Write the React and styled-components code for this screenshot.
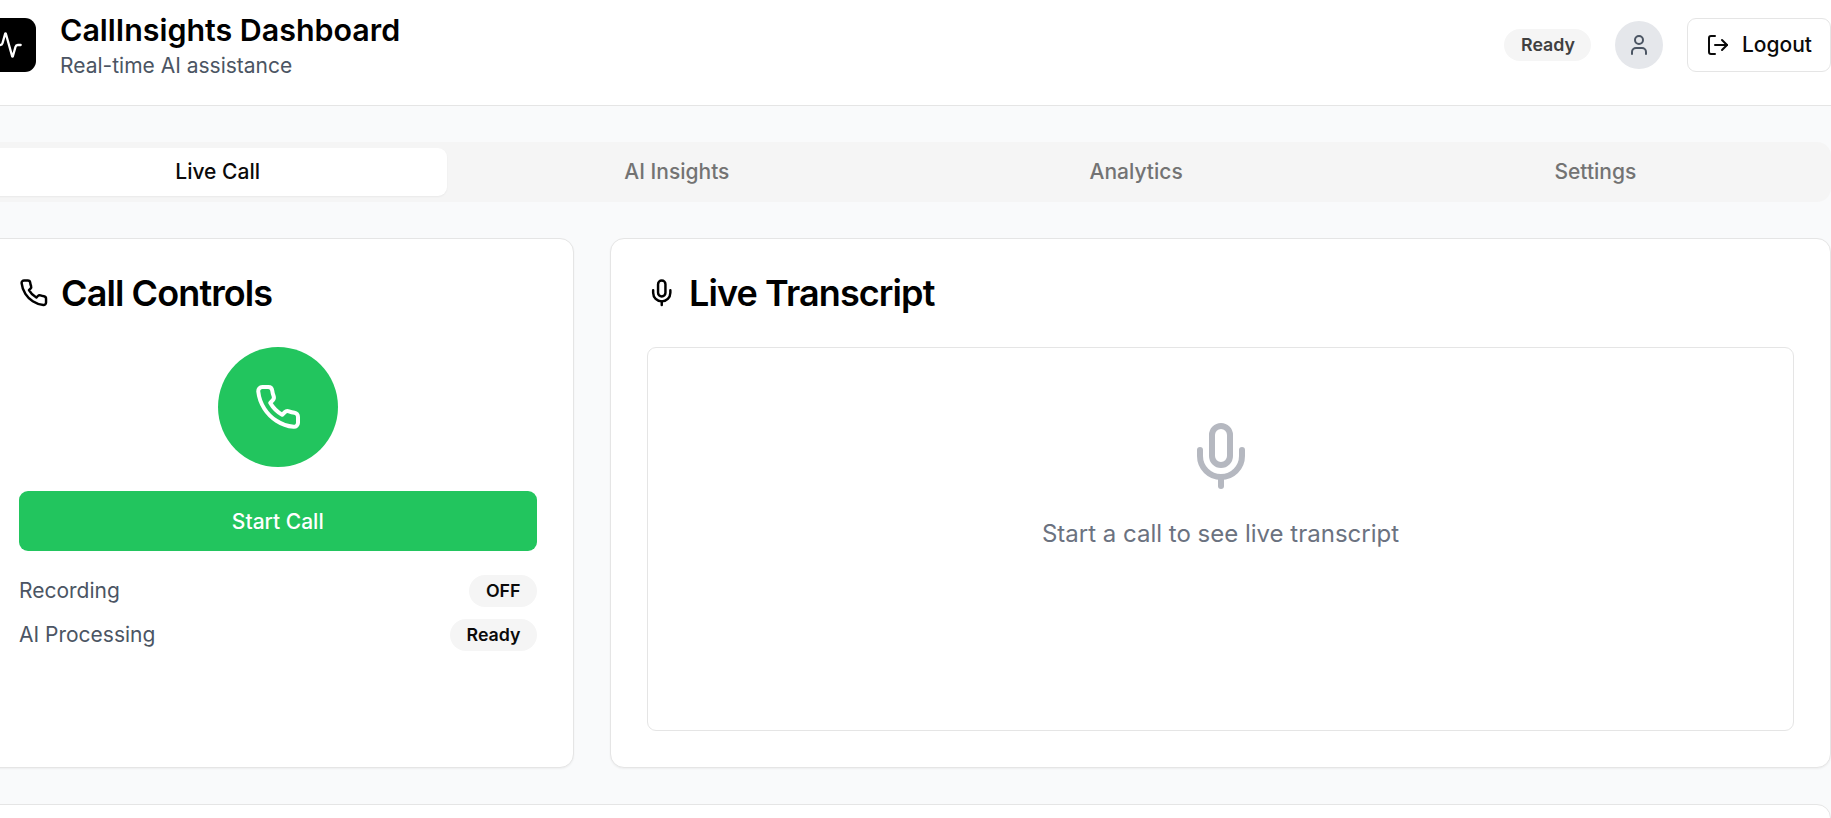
import React from "react";
import styled, { createGlobalStyle } from "styled-components";
import { Activity, User, LogOut, Mic } from "lucide-react";

const Global = createGlobalStyle`
  html, body { margin: 0; padding: 0; overflow: hidden; background: #f9fafb; }
  body { font-family: Inter, "Liberation Sans", sans-serif; color: #0a0a0a; }
  * { box-sizing: border-box; }
`;

const Page = styled.div`
  width: 1849px;
  height: 818px;
  margin-left: -18px;
  overflow: hidden;
  background: #f9fafb;
`;

const Header = styled.header`
  height: 106px;
  padding-bottom: 16px;
  background: #fff;
  border-bottom: 1px solid #e5e5e5;
  display: flex;
  align-items: center;
  justify-content: space-between;
`;

const Brand = styled.div`
  display: flex;
  align-items: center;
  gap: 24px;
`;

const Logo = styled.div`
  width: 54px;
  height: 54px;
  border-radius: 11px;
  background: #000;
  color: #fff;
  display: flex;
  align-items: center;
  justify-content: center;
`;

const BrandText = styled.div`
  display: flex;
  flex-direction: column;
  padding-top: 4px;
`;

const Title = styled.h1`
  margin: 0;
  font-size: 30.4px;
  line-height: 38px;
  font-weight: 600;
  color: #000;
`;

const Subtitle = styled.p`
  margin: 0;
  font-size: 21px;
  line-height: 33px;
  color: #4b5563;
`;

const HeaderActions = styled.div`
  display: flex;
  align-items: center;
  gap: 24px;
`;

const Pill = styled.span`
  display: inline-flex;
  align-items: center;
  height: 32px;
  padding: 0 16px 0 17px;
  border-radius: 999px;
  background: #f5f5f5;
  font-size: 17.8px;
  font-weight: 600;
  color: ${(p) => p.$color || "#0a0a0a"};
`;

const Avatar = styled.div`
  width: 48px;
  height: 48px;
  border-radius: 50%;
  background: #e5e7eb;
  color: #4b5563;
  display: flex;
  align-items: center;
  justify-content: center;
`;

const LogoutButton = styled.button`
  width: 144px;
  height: 54px;
  padding: 0;
  border: 1px solid #e5e5e5;
  border-radius: 9px;
  background: #fff;
  color: #0a0a0a;
  font: 500 21px Inter, sans-serif;
  display: flex;
  align-items: center;
  justify-content: center;
  gap: 12px;
`;

const Main = styled.main`
  padding-top: 36px;
  display: flex;
  flex-direction: column;
  gap: 36px;
`;

const Tabs = styled.nav`
  height: 60px;
  padding: 6px;
  border-radius: 14px;
  background: #f5f5f5;
  display: grid;
  grid-template-columns: repeat(4, 1fr);
`;

const Tab = styled.button`
  border: 0;
  padding: 0 0 1px;
  border-radius: 9px;
  background: ${(p) => (p.$active ? "#fff" : "transparent")};
  box-shadow: ${(p) => (p.$active ? "0 1px 2px rgba(0,0,0,.05)" : "none")};
  color: ${(p) => (p.$active ? "#0a0a0a" : "#737373")};
  font: 500 21px Inter, sans-serif;
`;

const Columns = styled.section`
  display: grid;
  grid-template-columns: 591.5px 1fr;
  gap: 36.5px;
`;

const Card = styled.article`
  height: 530px;
  padding: 36px;
  background: #fff;
  border: 1px solid #e5e5e5;
  border-radius: 14px;
  box-shadow: 0 1px 2px rgba(0,0,0,.05);
  display: flex;
  flex-direction: column;
`;

const CardTitle = styled.h2`
  margin: 0 0 36px;
  height: 36px;
  display: flex;
  align-items: center;
  gap: 12.5px;
  font-size: 36px;
  font-weight: 600;
  letter-spacing: -0.025em;
  color: #000;
`;

const CallCircle = styled.div`
  width: 120px;
  height: 120px;
  align-self: center;
  border-radius: 50%;
  background: #22c55e;
  color: #fff;
  display: flex;
  align-items: center;
  justify-content: center;
`;

const StartButton = styled.button`
  margin-top: 24px;
  height: 60px;
  border: 0;
  border-radius: 9px;
  background: #22c55e;
  color: #fff;
  font: 500 21px Inter, sans-serif;
`;

const StatusList = styled.div`
  margin-top: 24px;
  display: flex;
  flex-direction: column;
  gap: 12px;
`;

const StatusRow = styled.div`
  display: flex;
  align-items: center;
  justify-content: space-between;
  font-size: 21px;
  line-height: 30px;
  color: #4b5563;
`;

const RowLabel = styled.span`
  margin-top: -1px;
`;

const TranscriptBox = styled.div`
  height: 385px;
  border: 1px solid #e5e5e5;
  border-radius: 9px;
  display: flex;
  flex-direction: column;
  align-items: center;
  padding-top: 72px;
  gap: 26px;
  color: #b5b8c0;
`;

const Placeholder = styled.p`
  margin: 0;
  font-size: 24px;
  line-height: 32px;
  color: #6b7280;
`;

const BottomCard = styled.article`
  height: 200px;
  background: #fff;
  border: 1px solid #e5e5e5;
  border-radius: 14px;
`;

const PhoneIcon = ({ size }) => (
  <svg
    width={size}
    height={size}
    viewBox="0 0 24 24"
    fill="none"
    stroke="currentColor"
    strokeWidth="2"
    strokeLinecap="round"
    strokeLinejoin="round"
  >
    <path d="M22 16.92v3a2 2 0 0 1-2.18 2 19.79 19.79 0 0 1-8.63-3.07 19.5 19.5 0 0 1-6-6 19.79 19.79 0 0 1-3.07-8.67A2 2 0 0 1 4.11 2h3a2 2 0 0 1 2 1.72 12.84 12.84 0 0 0 .7 2.81 2 2 0 0 1-.45 2.11L8.09 9.91a16 16 0 0 0 6 6l1.27-1.27a2 2 0 0 1 2.11-.45 12.84 12.84 0 0 0 2.81.7A2 2 0 0 1 22 16.92z" />
  </svg>
);

export default function App() {
  return (
    <Page>
      <Global />
      <Header>
        <Brand>
          <Logo><Activity size={28} /></Logo>
          <BrandText>
            <Title>CallInsights Dashboard</Title>
            <Subtitle>Real-time AI assistance</Subtitle>
          </BrandText>
        </Brand>
        <HeaderActions>
          <Pill $color="#404040">Ready</Pill>
          <Avatar><User size={24} /></Avatar>
          <LogoutButton><LogOut size={24} />Logout</LogoutButton>
        </HeaderActions>
      </Header>
      <Main>
        <Tabs>
          <Tab $active>Live Call</Tab>
          <Tab>AI Insights</Tab>
          <Tab>Analytics</Tab>
          <Tab>Settings</Tab>
        </Tabs>
        <Columns>
          <Card>
            <CardTitle><PhoneIcon size={29.5} />Call Controls</CardTitle>
            <CallCircle><PhoneIcon size={48} /></CallCircle>
            <StartButton>Start Call</StartButton>
            <StatusList>
              <StatusRow><RowLabel>Recording</RowLabel><Pill>OFF</Pill></StatusRow>
              <StatusRow><RowLabel>AI Processing</RowLabel><Pill>Ready</Pill></StatusRow>
            </StatusList>
          </Card>
          <Card>
            <CardTitle><Mic size={29.5} />Live Transcript</CardTitle>
            <TranscriptBox>
              <Mic size={72} />
              <Placeholder>Start a call to see live transcript</Placeholder>
            </TranscriptBox>
          </Card>
        </Columns>
        <BottomCard />
      </Main>
    </Page>
  );
}
